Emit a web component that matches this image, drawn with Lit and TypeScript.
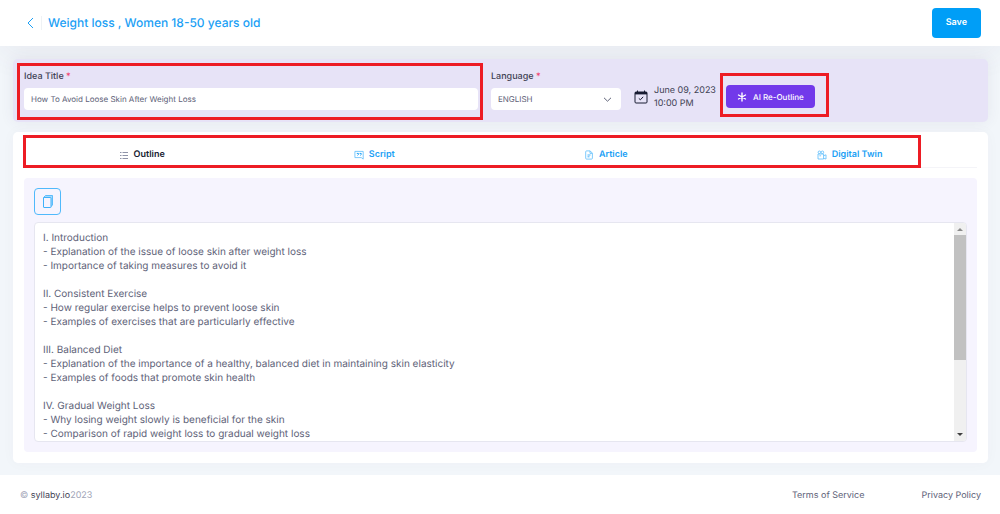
import { LitElement, html, css, svg } from "lit";
import { customElement, state } from "lit/decorators.js";

const OUTLINE = `I. Introduction
- Explanation of the issue of loose skin after weight loss
- Importance of taking measures to avoid it

II. Consistent Exercise
- How regular exercise helps to prevent loose skin
- Examples of exercises that are particularly effective

III. Balanced Diet
- Explanation of the importance of a healthy, balanced diet in maintaining skin elasticity
- Examples of foods that promote skin health

IV. Gradual Weight Loss
- Why losing weight slowly is beneficial for the skin
- Comparison of rapid weight loss to gradual weight loss`;

const icons = {
  outline: svg`<svg class="icon" viewBox="0 0 10 10" width="10" height="10" fill="none" stroke="#8f93a8"><path d="M1 2.5h1.5M1 5.5h1.5M1 8.5h1.5M3.5 2.5H9M3.5 5.5H9M3.5 8.5H9" stroke-width="1"/></svg>`,
  script: svg`<svg class="icon" viewBox="0 0 10 10" width="10" height="10" fill="none" stroke="#5cbcfb" stroke-width=".8"><path d="M.9 1.4h8.3v7.7L7.3 7.6H.9z"/><path d="M2.8 3.4h1.6v1.2L3.5 5.4M5.6 3.4h1.6v1.2L6.3 5.4" stroke="#1da1f9" stroke-width="1"/></svg>`,
  article: svg`<svg class="icon" viewBox="0 0 10 10" width="10" height="10" fill="none" stroke="#5cbcfb" stroke-width=".8"><path d="M2.6.9h3.6l2.2 2.3v5q0 .9-.9.9H2.6q-.9 0-.9-.9V1.8q0-.9.9-.9zM6 1v2.4h2.3"/><path d="M3.5 5h3M3.5 6.8h2" stroke="#1da1f9"/></svg>`,
  twin: svg`<svg class="icon" viewBox="0 0 10 10" width="10" height="10" fill="none" stroke="#5cbcfb" stroke-width=".8"><circle cx="2.4" cy="2.3" r="1.3"/><circle cx="5.4" cy="2.3" r="1.3"/><path d="M1 4h5.6v5H1zM6.6 5.8l2.4-1V9l-2.4-.6M2.4 5.8h1.7"/></svg>`,
};

const TABS = [
  { id: "outline", label: "Outline" },
  { id: "script", label: "Script" },
  { id: "article", label: "Article" },
  { id: "twin", label: "Digital Twin" },
] as const;

@customElement("app-root")
export class AppRoot extends LitElement {
  @state() private active: string = "outline";

  static styles = css`
    :host {
      display: flex;
      flex-direction: column;
      min-height: 100vh;
      background: #f2f6fa;
      font-family: Inter, "Liberation Sans", sans-serif;
      font-size: 9px;
      line-height: 14px;
      color: #5e6278;
      text-rendering: geometricPrecision;
    }
    * {
      box-sizing: border-box;
    }
    button,
    input,
    select,
    textarea {
      font: inherit;
      color: inherit;
      margin: 0;
      text-rendering: inherit;
    }
    button {
      cursor: pointer;
    }
    a {
      color: inherit;
      text-decoration: none;
    }
    svg {
      display: block;
      flex: none;
    }
    .header {
      display: flex;
      align-items: center;
      padding: 8px 19px 8px 24px;
      background: #fff;
      box-shadow: 0 10px 30px rgba(82, 63, 105, 0.06);
    }
    .back {
      display: flex;
      padding: 0 3px 0 0;
      border: 0;
      border-right: 1px solid #eff2f5;
      background: none;
    }
    .heading {
      flex: 1;
      margin: 0 0 0 6px;
      font-size: 12px;
      line-height: 16px;
      font-weight: 500;
      color: #1b9ff5;
    }
    .save {
      padding: 8px 14px;
      border: 0;
      border-radius: 4px;
      background: #009ef7;
      color: #fff;
      font-weight: 600;
    }
    .content {
      flex: 1;
      display: flex;
      flex-direction: column;
      gap: 10px;
      padding: 13px 12px 12px 13px;
    }
    .details {
      display: grid;
      grid-template-columns: minmax(0, 454fr) minmax(0, 130fr) minmax(0, 343fr);
      gap: 13px;
      padding: 11px 11px 12px;
      border-radius: 5px;
      background: #e7e3f7;
      box-shadow: 0 0 14px rgba(82, 63, 105, 0.08);
    }
    .marked {
      position: relative;
    }
    .marked::after {
      content: "";
      position: absolute;
      inset: -7px -5px -10px -7px;
      border: 3px solid #ed1c24;
      pointer-events: none;
    }
    .field {
      display: flex;
      flex-direction: column;
      gap: 4px;
    }
    .label {
      font-weight: 500;
      color: #3f4254;
    }
    .required {
      color: #f1416c;
    }
    .input {
      width: 100%;
      height: 22px;
      padding: 0 7px;
      border: 0;
      border-radius: 4px;
      background: #fff;
      font-size: 8px;
    }
    .select-wrap {
      display: grid;
      align-items: center;
    }
    .select-wrap > * {
      grid-area: 1 / 1;
    }
    .select {
      appearance: none;
    }
    .chevron {
      justify-self: end;
      margin-right: 9px;
      pointer-events: none;
    }
    .schedule {
      display: flex;
      align-items: flex-end;
    }
    .date {
      display: flex;
      align-items: center;
      gap: 6px;
      width: 92px;
      line-height: 13px;
      white-space: nowrap;
      color: #3f4254;
    }
    .ai {
      display: flex;
      margin: 0 0 2px;
    }
    .ai::after {
      inset: -12px -14px -9px -6px;
    }
    .ai-button {
      display: flex;
      align-items: center;
      gap: 6px;
      height: 23px;
      padding: 0 11px;
      border: 0;
      border-radius: 4px;
      background: #7239ea;
      color: #fff;
      font-size: 8px;
      font-weight: 500;
      white-space: nowrap;
    }
    .card {
      flex: 1;
      display: flex;
      flex-direction: column;
      gap: 10px;
      padding: 4px 11px 11px;
      border-radius: 5px;
      background: #fff;
      box-shadow: 0 0 14px rgba(82, 63, 105, 0.03);
    }
    .tabs {
      display: flex;
      border-bottom: 1px solid #f4f4f8;
    }
    .tabs::after {
      inset: -1px 56px -1px -1px;
    }
    .tab {
      flex: 1 1 auto;
      display: flex;
      align-items: center;
      justify-content: center;
      gap: 5px;
      padding: 12px 0 5px;
      border: 0;
      background: none;
      color: #1b9ff5;
      font-weight: 600;
    }
    .tab.active {
      color: #181c32;
    }
    .panel {
      flex: 1;
      display: flex;
      flex-direction: column;
      align-items: flex-start;
      gap: 7px;
      padding: 10px;
      border-radius: 4px;
      background: #f6f4fe;
    }
    .copy {
      display: flex;
      padding: 5px;
      border: 1px solid #50b9fb;
      border-radius: 4px;
      background: none;
    }
    .editor {
      flex: 1;
      align-self: stretch;
      display: flex;
      min-height: 219px;
      border: 1px solid #e6e6f0;
      border-radius: 4px;
      background: #fff;
      overflow: hidden;
    }
    .text {
      flex: 1;
      height: auto;
      padding: 8px 8px 0;
      border: 0;
      outline: 0;
      resize: none;
      background: none;
      overflow: auto;
      scrollbar-width: none;
      font-size: 10px;
    }
    .scrollbar {
      display: flex;
      flex-direction: column;
      align-items: center;
      width: 12px;
      background: #f0f0f0;
    }
    .thumb {
      flex: 125;
      align-self: stretch;
      background: #c1c1c1;
    }
    .track {
      flex: 69;
    }
    .footer {
      display: flex;
      gap: 57px;
      padding: 14px 19px 11px 20px;
      background: #fff;
    }
    .copyright {
      flex: 1;
      color: #a1a5b7;
    }
    .brand {
      color: #3f4254;
    }
  `;

  render() {
    return html`
      <header class="header">
        <button class="back" aria-label="Back">
          <svg viewBox="0 0 14 14" width="14" height="14" fill="none" stroke="#1b9ff5"><path d="M9 2 4 7l5 5" /></svg>
        </button>
        <h1 class="heading">Weight loss , Women 18-50 years old</h1>
        <button class="save">Save</button>
      </header>
      <main class="content">
        <section class="details">
          <div class="field marked">
            <label class="label" for="title">Idea Title <span class="required">*</span></label>
            <input class="input" id="title" type="text" value="How To Avoid Loose Skin After Weight Loss" />
          </div>
          <div class="field">
            <label class="label" for="language">Language <span class="required">*</span></label>
            <div class="select-wrap">
              <select class="input select" id="language"><option>ENGLISH</option></select>
              <svg class="chevron" viewBox="0 0 9 9" width="9" height="9" fill="none" stroke="#5e6278"><path d="m1 2.8 3.5 3.4L8 2.8" /></svg>
            </div>
          </div>
          <div class="schedule">
            <div class="date">
              <svg viewBox="0 0 14 14" width="14" height="14" fill="none" stroke="#181c32"><rect x="1" y="2" width="12" height="11" rx="1" /><path d="M1 3.2h12" stroke-width="2.4" /><path d="M3.5.5v2M10.5.5v2M4.8 8.4l1.6 1.4 2.8-3" /></svg>
              <div>June 09, 2023<br />10:00 PM</div>
            </div>
            <div class="ai marked">
              <button class="ai-button">
                <svg viewBox="0 0 10 10" width="10" height="10" fill="none" stroke="#fff" stroke-width="1.4" stroke-linecap="round"><path d="M5 1v8M1.5 3l7 4M8.5 3l-7 4" /></svg>
                AI Re-Outline
              </button>
            </div>
          </div>
        </section>
        <section class="card">
          <div class="tabs marked" role="tablist">
            ${TABS.map(
              (t) => html`<button
                class="tab ${t.id === this.active ? "active" : ""}"
                role="tab"
                aria-selected=${t.id === this.active}
                @click=${() => (this.active = t.id)}
              >${icons[t.id]}<span>${t.label}</span></button>`
            )}
          </div>
          <div class="panel">
            <button class="copy" aria-label="Copy">
              <svg viewBox="0 0 15 15" width="15" height="15" fill="none" stroke="#3fb1fa"><path d="M3.5 3.5 5.5 1.5h7v9.5l-2 2V3.5z" fill="#a5dafc" stroke-width=".8" /><rect x="3.5" y="3.5" width="7.5" height="10" rx=".5" fill="#f6f4fe" /></svg>
            </button>
            <div class="editor">
              <textarea class="text" aria-label="Outline text" .value=${OUTLINE}></textarea>
              <div class="scrollbar" aria-hidden="true">
                <svg viewBox="0 0 12 12" width="12" height="12"><path d="M3 8l3-3 3 3z" fill="#8b8b8b" /></svg>
                <div class="thumb"></div>
                <div class="track"></div>
                <svg viewBox="0 0 12 12" width="12" height="12"><path d="M3 4l3 3 3-3z" fill="#404040" /></svg>
              </div>
            </div>
          </div>
        </section>
      </main>
      <footer class="footer">
        <div class="copyright">© <a class="brand" href="#">syllaby.io</a>2023</div>
        <a href="#">Terms of Service</a>
        <a href="#">Privacy Policy</a>
      </footer>
    `;
  }
}
